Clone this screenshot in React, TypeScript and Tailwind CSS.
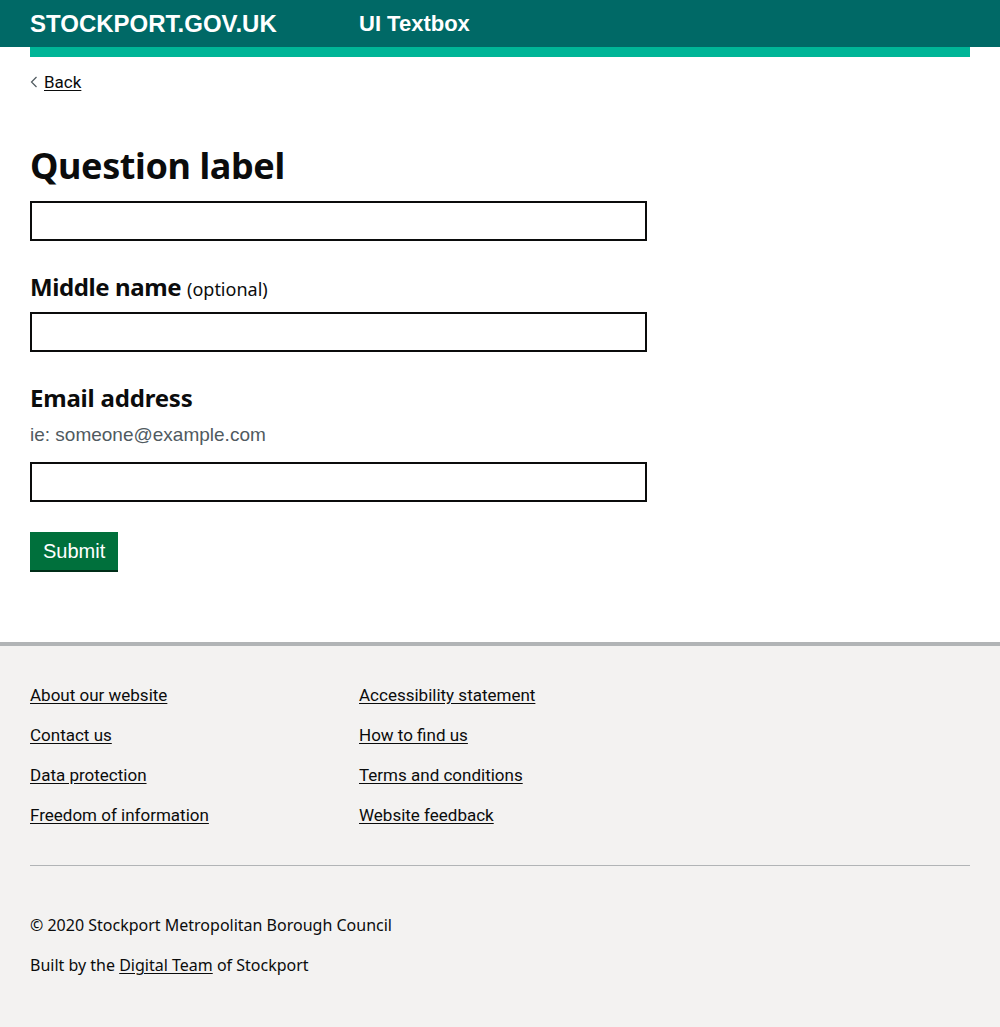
import React from 'react';

const footerLinks = [
  ["About our website", "Accessibility statement"],
  ["Contact us", "How to find us"],
  ["Data protection", "Terms and conditions"],
  ["Freedom of information", "Website feedback"],
];

function TextInput() {
  return (
    <input
      type="text"
      className="block w-[617px] h-10 border-2 border-[#0b0c0c] bg-white px-2 outline-none"
    />
  );
}

export default function App() {
  return (
    <div className="min-h-screen bg-white text-[#0b0c0c] font-['Roboto',sans-serif]">
      {/* Header */}
      <header className="bg-[#006966]">
        <div className="h-[47px] px-[30px] flex items-center">
          <span className="w-[329px] text-[24px] font-bold text-white font-['Liberation_Sans',sans-serif]">
            STOCKPORT.GOV.UK
          </span>
          <span className="text-[22px] font-bold text-white font-['Liberation_Sans',sans-serif]">UI Textbox</span>
        </div>
      </header>
      <div className="mx-[30px] h-[10px] bg-[#00b597]" />

      <main className="px-[30px] pb-[72px]">
        <a href="#" className="mt-[15px] inline-flex items-center gap-[6px] text-[16px] leading-5">
          <svg width="8" height="12" viewBox="0 0 8 12" fill="none">
            <path d="M6.5 1 L1.5 6 L6.5 11" stroke="#505a5f" strokeWidth="1.2" />
          </svg>
          <span className="underline underline-offset-2 text-[17px]">Back</span>
        </a>

        <h1 className="mt-[50px] text-[36px] leading-[42px] font-bold font-['Noto_Sans',sans-serif] tracking-[-0.4px]">
          Question label
        </h1>
        <div className="mt-[14px]">
          <TextInput />
        </div>

        <div className="mt-[31px]">
          <label className="block text-[24px] leading-[30px] font-bold font-['Noto_Sans',sans-serif] tracking-[-0.4px]">
            Middle name{' '}
            <span className="text-[18px] font-normal font-['Noto_Sans',sans-serif] tracking-normal">(optional)</span>
          </label>
          <div className="mt-[8px]">
            <TextInput />
          </div>
        </div>

        <div className="mt-[31px]">
          <label className="block text-[24px] leading-[30px] font-bold font-['Noto_Sans',sans-serif] tracking-[-0.2px]">
            Email address
          </label>
          <p className="mt-[10px] text-[19px] leading-6 text-[#505a5f] font-['Liberation_Sans',sans-serif]">
            ie: someone@example.com
          </p>
          <div className="mt-[15px]">
            <TextInput />
          </div>
        </div>

        <button className="mt-[30px] h-[38px] px-[13px] bg-[#00703c] text-white text-[20px] font-['Liberation_Sans',sans-serif] shadow-[0_2px_0_#002d18]">
          Submit
        </button>
      </main>

      {/* Footer */}
      <footer className="border-t-4 border-[#b1b4b6] bg-[#f3f2f1] px-[30px] pt-[39px] pb-[60px]">
        <div className="flex flex-col gap-5">
          {footerLinks.map(([a, b]) => (
            <div key={a} className="flex text-[17px] leading-5">
              <a href="#" className="w-[329px] underline underline-offset-2">{a}</a>
              <a href="#" className="underline underline-offset-2">{b}</a>
            </div>
          ))}
        </div>
        <hr className="mt-[40px] border-0 border-t border-[#b1b4b6]" />
        <div className="mt-[49px] flex flex-col gap-5 text-[16px] leading-5 font-['Noto_Sans',sans-serif]">
          <p>© 2020 Stockport Metropolitan Borough Council</p>
          <p>
            Built by the <a href="#" className="underline underline-offset-2">Digital Team</a> of Stockport
          </p>
        </div>
      </footer>
    </div>
  );
}
